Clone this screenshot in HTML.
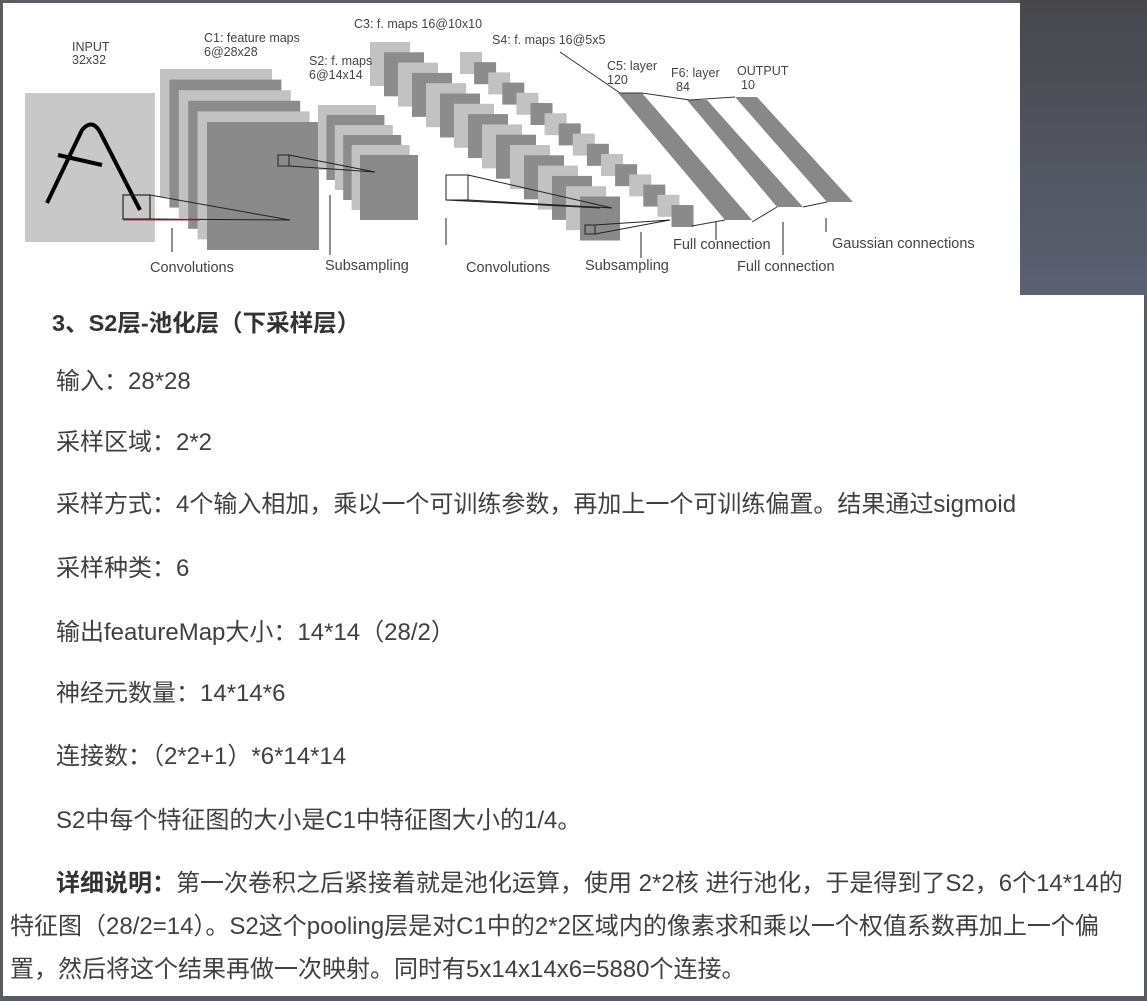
<!DOCTYPE html>
<html><head><meta charset="utf-8">
<style>
html,body{margin:0;padding:0;}
body{width:1147px;height:1001px;position:relative;overflow:hidden;background:#fff;font-family:"Liberation Sans","Noto Sans CJK SC",sans-serif;}
.frame{position:absolute;left:0;top:0;width:1141px;height:993px;border:3px solid #5a5c62;border-bottom-width:5px;}
.panel{position:absolute;left:1020px;top:0;width:127px;height:295px;background:linear-gradient(#47474b,#5b6172);}
.t{position:absolute;left:56px;font-size:24px;color:#404040;white-space:nowrap;line-height:28px;}
.h{font-weight:bold;left:52px;color:#333;font-size:23.5px;}
.p{position:absolute;left:10px;font-size:24px;color:#404040;line-height:43px;top:862px;white-space:nowrap;}
svg{position:absolute;left:0;top:0;}
svg text{font-family:"Liberation Sans",sans-serif;fill:#444;}
</style></head><body>
<div class="frame"></div>
<div class="panel"></div>
<svg id="d" width="1020" height="295">
<g id="stacks"></g>
<rect x="25" y="93" width="130" height="149" fill="#c8c8c8"/>
<path d="M47,203 L82,130 Q92,118 100,132 L140,210" stroke="#000" stroke-width="4" fill="none"/>
<path d="M58,155 L102,165" stroke="#000" stroke-width="4"/>
<rect x="123" y="195" width="27" height="24" fill="none" stroke="#222" stroke-width="1.2"/>
<path d="M123,219 L290,220 M150,195 L290,220 M150,219 L290,220" stroke="#222" stroke-width="1"/>
<path d="M123,220 L200,220" stroke="#a33" stroke-width="1"/>
<g id="fg"></g>
<polygon points="618,93 642,93 752,220 725,220" fill="#888"/>
<polygon points="687,100 707,100 803,207 777,207" fill="#888"/>
<polygon points="735,97 757,97 853,202 827,202" fill="#888"/>
<path d="M560,52 L620,93 L642,93 L690,100 L735,97 M692,226 L725,220 M752,222 L777,207 M803,207 L827,202" stroke="#333" stroke-width="1" fill="none"/>
<g stroke="#555" stroke-width="1.3">
<line x1="172" y1="228" x2="172" y2="252"/><line x1="330" y1="195" x2="330" y2="255"/>
<line x1="446" y1="218" x2="446" y2="245"/><line x1="641" y1="232" x2="641" y2="258"/>
<line x1="716" y1="222" x2="716" y2="240"/><line x1="783" y1="222" x2="783" y2="255"/>
<line x1="826" y1="218" x2="826" y2="232"/></g>
<g font-size="12.5">
<text x="72" y="51">INPUT</text><text x="72" y="64">32x32</text>
<text x="204" y="42">C1: feature maps</text><text x="204" y="56">6@28x28</text>
<text x="309" y="65">S2: f. maps</text><text x="309" y="79">6@14x14</text>
<text x="354" y="28">C3: f. maps 16@10x10</text>
<text x="492" y="44">S4: f. maps 16@5x5</text>
<text x="607" y="70">C5: layer</text><text x="607" y="84">120</text>
<text x="671" y="77">F6: layer</text><text x="676" y="91">84</text>
<text x="737" y="75">OUTPUT</text><text x="741" y="89">10</text>
</g>
<g font-size="14.5">
<text x="150" y="272">Convolutions</text><text x="325" y="270">Subsampling</text>
<text x="466" y="272">Convolutions</text><text x="585" y="270">Subsampling</text>
<text x="673" y="249">Full connection</text><text x="737" y="271">Full connection</text>
<text x="832" y="248">Gaussian connections</text>
</g>
</svg>
<div class="t h" style="top:309px">3、S2层-池化层（下采样层）</div>
<div class="t" style="top:368px">输入：28*28</div>
<div class="t" style="top:429px">采样区域：2*2</div>
<div class="t" style="top:491px">采样方式：4个输入相加，乘以一个可训练参数，再加上一个可训练偏置。结果通过sigmoid</div>
<div class="t" style="top:555px">采样种类：6</div>
<div class="t" style="top:619px">输出featureMap大小：14*14（28/2）</div>
<div class="t" style="top:680px">神经元数量：14*14*6</div>
<div class="t" style="top:743px">连接数：（2*2+1）*6*14*14</div>
<div class="t" style="top:807px">S2中每个特征图的大小是C1中特征图大小的1/4。</div>
<div class="p"><span style="display:inline-block;width:46px"></span><b style="color:#333">详细说明：</b>第一次卷积之后紧接着就是池化运算，使用 2*2核 进行池化，于是得到了S2，6个14*14的<br>特征图（28/2=14）。S2这个pooling层是对C1中的2*2区域内的像素求和乘以一个权值系数再加上一个偏<br>置，然后将这个结果再做一次映射。同时有5x14x14x6=5880个连接。</div>
<script>
var g=document.getElementById('stacks'),s='';
function st(n,x0,y0,dx,dy,w,h){for(var i=0;i<n;i++){var c=(i%2==0)?'#c2c2c2':'#8c8c8c';if(i==n-1)c='#8a8a8a';s+='<rect x="'+(x0+i*dx)+'" y="'+(y0+i*dy)+'" width="'+w+'" height="'+h+'" fill="'+c+'"/>';}}
st(6,160,69,9.4,10.6,112,128);
st(6,318,105,8.4,10,58,65);
st(16,370,42,14,10.3,40,44);
st(16,460,52,14.1,10.2,22,22);
g.innerHTML=s;
document.getElementById('fg').innerHTML='<rect x="278" y="155" width="11" height="11" fill="none" stroke="#222"/><path d="M289,155 L375,172 M289,166 L375,172" stroke="#222"/><rect x="446" y="175" width="22" height="25" fill="none" stroke="#222"/><path d="M468,175 L612,208 M468,200 L612,208 M446,200 L600,208" stroke="#222"/><rect x="585" y="225" width="10" height="9" fill="none" stroke="#222"/><path d="M595,225 L670,220 M595,234 L670,220" stroke="#222"/>';
</script>
</body></html>
